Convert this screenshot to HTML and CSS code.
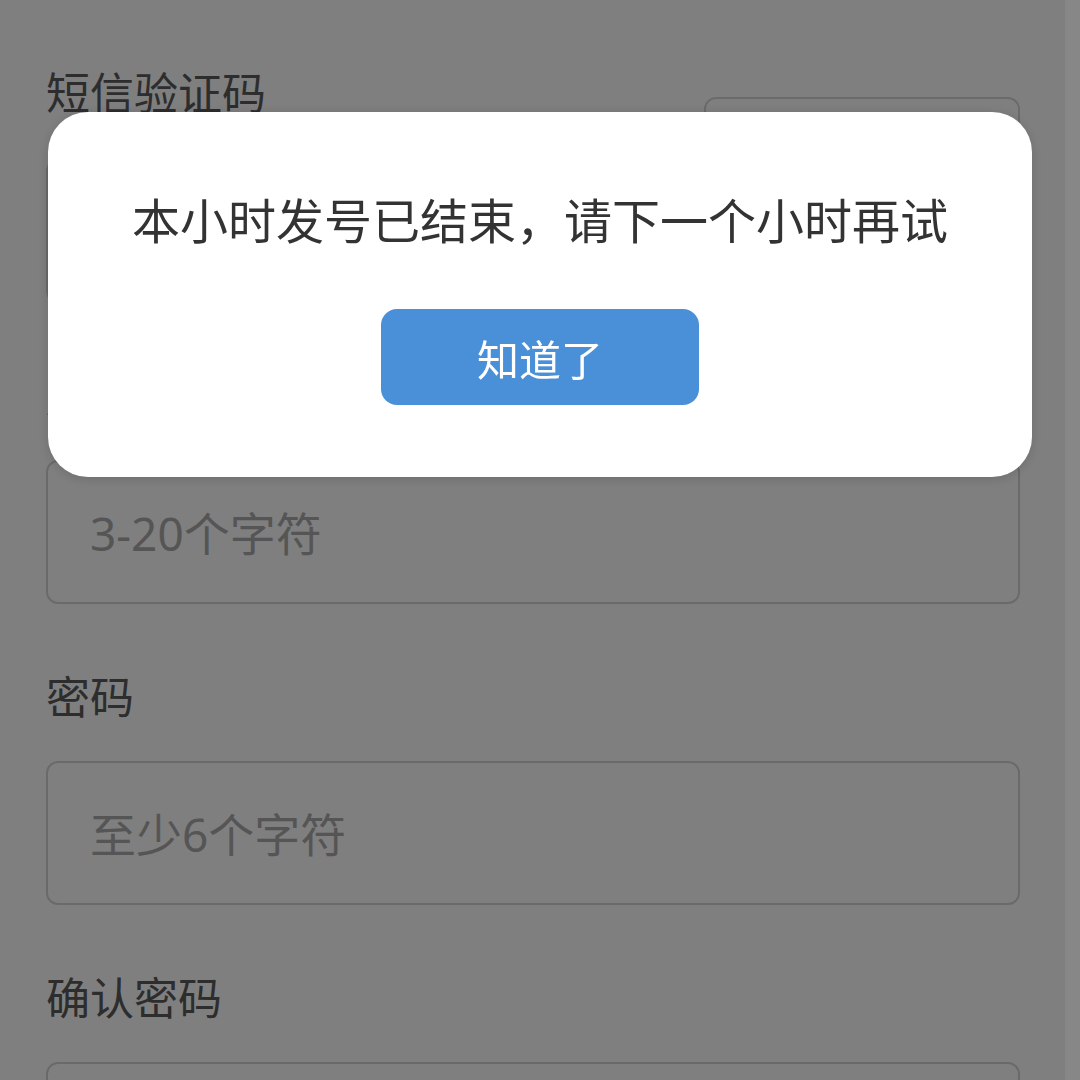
FILE: index.html
```html
<!DOCTYPE html>
<html lang="zh-CN">
<head>
<meta charset="utf-8">
<title>注册</title>
<link rel="stylesheet" href="styles.css">
</head>
<body>
<main class="form">
  <section class="field field-sms">
    <div class="label">短信验证码</div>
    <div class="input"><span class="ph">请输入验证码</span></div>
    <div class="code-btn">获取验证码</div>
  </section>
  <section class="field">
    <div class="label">用户名</div>
    <div class="input"><span class="ph"><span class="num">3-20</span>个字符</span></div>
  </section>
  <section class="field">
    <div class="label">密码</div>
    <div class="input"><span class="ph">至少<span class="num">6</span>个字符</span></div>
  </section>
  <section class="field">
    <div class="label">确认密码</div>
    <div class="input"></div>
  </section>
</main>
<div class="mask"></div>
<div class="dialog">
  <p class="msg">本小时发号已结束，请下一个小时再试</p>
  <button class="ok">知道了</button>
</div>
</body>
</html>
```
FILE: styles.css
```css
html, body {
  margin: 0;
  padding: 0;
  background: #ffffff;
  font-family: "Noto Sans CJK SC", "Noto Sans", sans-serif;
  overflow: hidden;
  height: 1080px;
}
.form {
  padding: 61px 60px 0 46px;
  display: flex;
  flex-direction: column;
  gap: 61px;
}
.field {
  display: flex;
  flex-direction: column;
  gap: 36px;
}
.field-sms {
  display: grid;
  grid-template-columns: 1fr 316px;
  column-gap: 24px;
  row-gap: 38px;
}
.field-sms .label { grid-column: 1; grid-row: 1; }
.field-sms .input { grid-column: 1; grid-row: 2; }
.code-btn {
  grid-column: 2;
  grid-row: 1 / span 2;
  margin-top: 36px;
  border: 2px solid #d6d6d6;
  border-radius: 12px;
  display: flex;
  align-items: center;
  justify-content: center;
  font-size: 40px;
  color: #4a90d9;
}
.label {
  font-size: 44px;
  line-height: 60px;
  height: 60px;
  color: #5a5a5a;
}
.input {
  box-sizing: border-box;
  height: 144px;
  border: 2px solid #d4d4d4;
  border-radius: 12px;
  padding-left: 42px;
  display: flex;
  align-items: center;
}
.ph {
  font-size: 46px;
  line-height: 60px;
  color: #ababab;
}
.num {
  font-family: "Noto Sans", sans-serif;
}
.mask {
  position: fixed;
  inset: 0;
  background: linear-gradient(to right, rgba(0,0,0,0.5) 0, rgba(0,0,0,0.5) 1065px, rgba(0,0,0,0.47) 1065px);
}
.dialog {
  position: fixed;
  left: 48px;
  top: 112px;
  width: 984px;
  height: 365px;
  box-sizing: border-box;
  background: #ffffff;
  border-radius: 40px;
  box-shadow: 0 2px 12px rgba(0,0,0,0.15);
  display: flex;
  flex-direction: column;
  align-items: center;
  padding-top: 76px;
}
.msg {
  margin: 0;
  font-size: 48px;
  line-height: 60px;
  color: #333333;
}
.ok {
  margin-top: 61px;
  width: 318px;
  height: 96px;
  border: none;
  border-radius: 16px;
  background: #4a90d9;
  color: #ffffff;
  font-family: "Noto Sans CJK SC", "Noto Sans", sans-serif;
  font-size: 42px;
  padding: 0;
}
```
